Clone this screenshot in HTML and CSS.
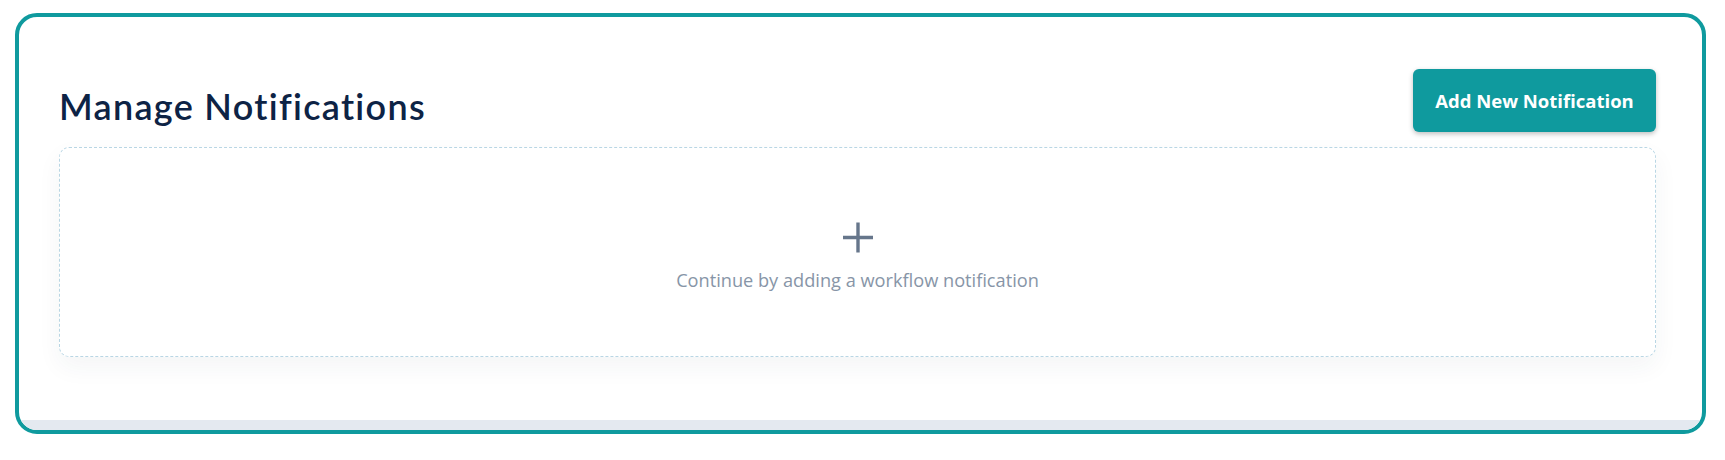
FILE: index.html
```html
<!DOCTYPE html>
<html>
<head>
<meta charset="utf-8">
<link rel="stylesheet" href="styles.css">
</head>
<body>
<div class="frame">
  <div class="content">
    <div class="header">
      <h1 class="title">Manage Notifications</h1>
      <button class="btn-add">Add New Notification</button>
    </div>
    <div class="empty-box">
      <svg class="plus" width="30" height="31" viewBox="0 0 30 31"><path d="M15 0.5v30M0 15.5h30" stroke="#66768b" stroke-width="3.4" fill="none"/></svg>
      <p class="empty-text">Continue by adding a workflow notification</p>
    </div>
  </div>
  <div class="strip"></div>
</div>
</body>
</html>
```
FILE: styles.css
```css
html, body {
  margin: 0;
  padding: 0;
  background: #ffffff;
}
body {
  padding-top: 13px;
  padding-left: 15px;
}
.frame {
  width: 1683px;
  height: 413px;
  border: 4px solid #0f9a9e;
  border-radius: 22px;
  overflow: hidden;
  display: flex;
  flex-direction: column;
  background: #ffffff;
}
.content {
  flex: 1;
  padding: 52px 46px 0 40px;
}
.header {
  display: flex;
  justify-content: space-between;
  align-items: flex-end;
  height: 63px;
}
.title {
  margin: 0 0 5px 0;
  font-family: "Lato", sans-serif;
  font-weight: 600;
  font-size: 36px;
  line-height: 42px;
  letter-spacing: 1.3px;
  color: #0d2345;
}
.btn-add {
  width: 243px;
  height: 63px;
  border: none;
  border-radius: 6px;
  background: #0f9a9e;
  color: #ffffff;
  font-family: "Open Sans", sans-serif;
  font-weight: 700;
  font-size: 18.5px;
  box-shadow: 0 2px 5px rgba(0, 0, 0, 0.25);
  padding: 0;
}
.empty-box {
  margin-top: 15px;
  border: 1px dashed #b9d6e4;
  border-radius: 10px;
  box-shadow: 0 10px 24px rgba(30, 50, 80, 0.05);
  display: flex;
  flex-direction: column;
  align-items: center;
  padding-top: 74px;
  box-sizing: content-box;
  height: 134px;
}
.plus {
  display: block;
}
.empty-text {
  margin: 15px 0 0 0;
  font-family: "Open Sans", sans-serif;
  font-size: 18.2px;
  line-height: 24px;
  color: #8795a7;
}
.strip {
  height: 10px;
  background: #e4e9f0;
}
```
